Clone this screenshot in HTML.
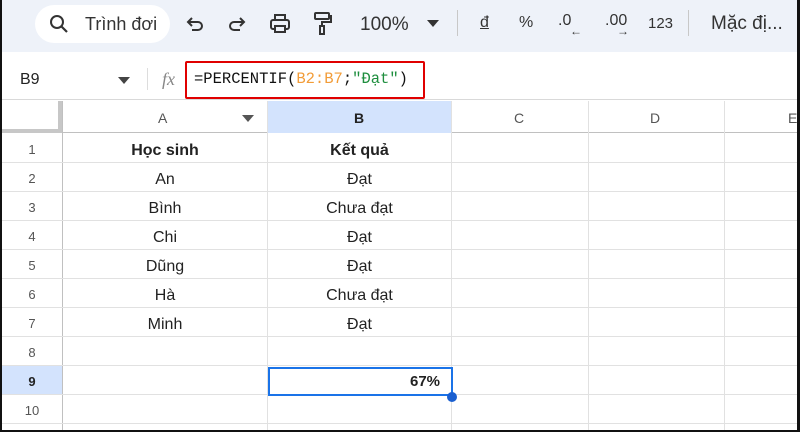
<!DOCTYPE html>
<html><head><meta charset="utf-8"><style>
*{margin:0;padding:0;box-sizing:border-box}
body{width:800px;height:432px;overflow:hidden;background:#fff;font-family:"Liberation Sans",Arial,sans-serif;position:relative}
.frame{position:absolute;left:0;top:0;width:800px;height:432px;border:2px solid #111;border-top:none;border-right:3px solid #111;z-index:10;pointer-events:none}
.tb{position:absolute;left:2px;top:0;width:796px;height:52px;background:#eef2f9}
.search{position:absolute;left:35px;top:5px;width:135px;height:38px;background:#fff;border-radius:19px}
.t{position:absolute;white-space:nowrap;color:#333}
.fb{position:absolute;left:2px;top:56px;width:796px;height:44px;background:#fff;border-bottom:1px solid #d9d9d9}
.hl{position:absolute;background:#e1e1e1}
.c{position:absolute;font-size:16px;color:#222;text-align:center}
.rn{position:absolute;left:2px;width:60px;text-align:center;font-size:13px;color:#555}
</style></head><body>
<div class="tb"></div>
<div class="search"></div>
<svg style="position:absolute;left:48px;top:13px" width="22" height="22" viewBox="0 0 22 22"><circle cx="9" cy="9" r="6" fill="none" stroke="#333" stroke-width="2"/><path d="M13.5 13.5L19 19" stroke="#333" stroke-width="2.2"/></svg>
<div class="t" style="left:85px;top:14px;font-size:18px">Trình đơi</div>
<svg style="position:absolute;left:184px;top:14px" width="22" height="22" viewBox="0 0 22 22" fill="none" stroke="#333" stroke-width="2"><path d="M5 8h9a4 4 0 010 8H8"/><path d="M8 4L4 8l4 4"/></svg>
<svg style="position:absolute;left:226px;top:14px" width="22" height="22" viewBox="0 0 22 22" fill="none" stroke="#333" stroke-width="2"><path d="M17 8H8a4 4 0 000 8h6"/><path d="M14 4l4 4-4 4"/></svg>
<svg style="position:absolute;left:268px;top:13px" width="24" height="22" viewBox="0 0 24 22" fill="none" stroke="#333" stroke-width="2"><rect x="7" y="2" width="10" height="5"/><rect x="3" y="7" width="18" height="9" rx="2"/><rect x="7" y="13" width="10" height="6" fill="#eef2f9"/></svg>
<svg style="position:absolute;left:312px;top:11px" width="20" height="26" viewBox="0 0 20 26" fill="none" stroke="#333" stroke-width="2"><rect x="3" y="2" width="14" height="6" rx="1"/><path d="M17 5h2v6h-9v4"/><rect x="8" y="15" width="4" height="8"/></svg>
<div class="t" style="left:360px;top:14px;font-size:19px">100%</div>
<svg style="position:absolute;left:427px;top:20px" width="12" height="8"><path d="M0 0h12L6 7z" fill="#333"/></svg>
<div style="position:absolute;left:457px;top:10px;width:1px;height:26px;background:#c8c8c8"></div>
<div class="t" style="left:480px;top:14px;font-size:16px;text-decoration:underline">đ</div>
<div class="t" style="left:519px;top:14px;font-size:16px">%</div>
<div class="t" style="left:558px;top:12px;font-size:16px">.0</div>
<div class="t" style="left:570px;top:24px;font-size:12px">←</div>
<div class="t" style="left:605px;top:12px;font-size:16px">.00</div>
<div class="t" style="left:617px;top:24px;font-size:12px">→</div>
<div class="t" style="left:648px;top:15px;font-size:15px">123</div>
<div style="position:absolute;left:688px;top:10px;width:1px;height:26px;background:#c8c8c8"></div>
<div class="t" style="left:711px;top:13px;font-size:19px">Mặc đị...</div>
<div class="fb"></div>
<div class="t" style="left:20px;top:71px;font-size:16px;color:#222">B9</div>
<svg style="position:absolute;left:118px;top:77px" width="12" height="7"><path d="M0 0h12L6 7z" fill="#444"/></svg>
<div style="position:absolute;left:147px;top:68px;width:1px;height:22px;background:#ddd"></div>
<div class="t" style="left:162px;top:69px;font-size:18px;font-style:italic;font-family:'Liberation Serif',serif;color:#888">fx</div>
<div style="position:absolute;left:185px;top:61px;width:240px;height:38px;border:2px solid #e00000;border-radius:2px"></div>
<div class="t" style="left:194px;top:70px;font-size:15.5px;font-family:'Liberation Mono',monospace;color:#111">=PERCENTIF(<span style="color:#f29c38">B2:B7</span>;<span style="color:#1e8e3e">"Đạt"</span>)</div>
<div style="position:absolute;left:2px;top:101px;width:796px;height:32px;background:#fff;border-bottom:1px solid #c0c0c0"></div>
<div style="position:absolute;left:2px;top:101px;width:60px;height:32px;background:#fff;border-right:4px solid #c7c7c7;border-bottom:4px solid #c7c7c7"></div>
<div style="position:absolute;left:268px;top:101px;width:183px;height:32px;background:#d3e3fd"></div>
<div style="position:absolute;left:2px;top:366px;width:60px;height:29px;background:#d3e3fd"></div>
<div class="hl" style="left:62px;top:101px;width:1px;height:331px;background:#c0c0c0"></div>
<div class="hl" style="left:267px;top:101px;width:1px;height:331px"></div>
<div class="hl" style="left:451px;top:101px;width:1px;height:331px"></div>
<div class="hl" style="left:588px;top:101px;width:1px;height:331px"></div>
<div class="hl" style="left:724px;top:101px;width:1px;height:331px"></div>
<div class="t" style="left:158px;top:110px;font-size:14px;color:#555">A</div>
<svg style="position:absolute;left:242px;top:115px" width="12" height="7"><path d="M0 0h12L6 7z" fill="#555"/></svg>
<div class="t" style="left:354px;top:110px;font-size:14px;color:#222;font-weight:bold">B</div>
<div class="t" style="left:514px;top:110px;font-size:14px;color:#555">C</div>
<div class="t" style="left:650px;top:110px;font-size:14px;color:#555">D</div>
<div class="t" style="left:788px;top:110px;font-size:14px;color:#555">E</div>
<div class="hl" style="left:2px;top:162px;width:796px;height:1px"></div>
<div class="hl" style="left:2px;top:191px;width:796px;height:1px"></div>
<div class="hl" style="left:2px;top:220px;width:796px;height:1px"></div>
<div class="hl" style="left:2px;top:249px;width:796px;height:1px"></div>
<div class="hl" style="left:2px;top:278px;width:796px;height:1px"></div>
<div class="hl" style="left:2px;top:307px;width:796px;height:1px"></div>
<div class="hl" style="left:2px;top:336px;width:796px;height:1px"></div>
<div class="hl" style="left:2px;top:365px;width:796px;height:1px"></div>
<div class="hl" style="left:2px;top:394px;width:796px;height:1px"></div>
<div class="hl" style="left:2px;top:423px;width:796px;height:1px"></div>
<div class="rn" style="top:142px">1</div><div class="rn" style="top:171px">2</div><div class="rn" style="top:200px">3</div><div class="rn" style="top:229px">4</div><div class="rn" style="top:258px">5</div><div class="rn" style="top:287px">6</div><div class="rn" style="top:316px">7</div><div class="rn" style="top:345px">8</div><div class="rn" style="top:374px;color:#222;font-weight:bold">9</div><div class="rn" style="top:403px">10</div>
<div class="c" style="left:63px;width:204px;top:142px;font-weight:bold">Học sinh</div>
<div class="c" style="left:268px;width:183px;top:142px;font-weight:bold">Kết quả</div>
<div class="c" style="left:63px;width:204px;top:171px">An</div><div class="c" style="left:268px;width:183px;top:171px">Đạt</div>
<div class="c" style="left:63px;width:204px;top:200px">Bình</div><div class="c" style="left:268px;width:183px;top:200px">Chưa đạt</div>
<div class="c" style="left:63px;width:204px;top:229px">Chi</div><div class="c" style="left:268px;width:183px;top:229px">Đạt</div>
<div class="c" style="left:63px;width:204px;top:258px">Dũng</div><div class="c" style="left:268px;width:183px;top:258px">Đạt</div>
<div class="c" style="left:63px;width:204px;top:287px">Hà</div><div class="c" style="left:268px;width:183px;top:287px">Chưa đạt</div>
<div class="c" style="left:63px;width:204px;top:316px">Minh</div><div class="c" style="left:268px;width:183px;top:316px">Đạt</div>
<div style="position:absolute;left:268px;top:367px;width:185px;height:29px;border:2px solid #1a73e8"></div>
<div class="t" style="left:410px;top:373px;font-size:15px;font-weight:bold;color:#222">67%</div>
<div style="position:absolute;left:447px;top:392px;width:10px;height:10px;border-radius:50%;background:#1a5fd0"></div>
<div class="frame"></div>
</body></html>
